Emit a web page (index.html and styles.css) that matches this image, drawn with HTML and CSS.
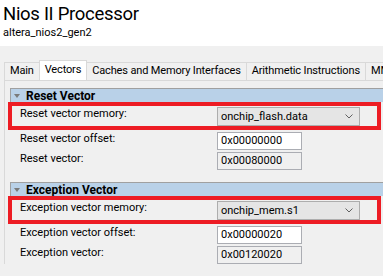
FILE: index.html
```html
<!DOCTYPE html>
<html>

<head>
    <meta charset="utf-8">
    <title>Nios II Processor</title>
    <link rel="stylesheet" href="styles.css">
</head>

<body>

    <header class="top">
        <h1>Nios II Processor</h1>
        <p>altera_nios2_gen2</p>
    </header>

    <section class="main">
        <div class="tabs">
            <div class="tab">Main</div>
            <div class="tab active">Vectors</div>
            <div class="tab">Caches and Memory Interfaces</div>
            <div class="tab">Arithmetic Instructions</div>
            <div class="tab">MMU and MPU Settings</div>
        </div>

        <div class="panel">
            <div class="group">
                <div class="group-title"><span class="caret"></span>Reset Vector</div>
                <div class="row mark">
                    <label>Reset vector memory:</label>
                    <div class="select">onchip_flash.data
                        <svg width="8" height="5" viewBox="0 0 8 5"><path d="M0.5 0.5 L4 4 L7.5 0.5" fill="none" stroke="#606060" stroke-width="1"/></svg>
                    </div>
                </div>
                <div class="row">
                    <label>Reset vector offset:</label>
                    <div class="field">0x00000000</div>
                </div>
                <div class="row">
                    <label>Reset vector:</label>
                    <div class="field ro">0x00080000</div>
                </div>
            </div>

            <div class="group">
                <div class="group-title"><span class="caret"></span>Exception Vector</div>
                <div class="row mark">
                    <label>Exception vector memory:</label>
                    <div class="select">onchip_mem.s1
                        <svg width="8" height="5" viewBox="0 0 8 5"><path d="M0.5 0.5 L4 4 L7.5 0.5" fill="none" stroke="#606060" stroke-width="1"/></svg>
                    </div>
                </div>
                <div class="row">
                    <label>Exception vector offset:</label>
                    <div class="field">0x00000020</div>
                </div>
                <div class="row">
                    <label>Exception vector:</label>
                    <div class="field ro">0x00120020</div>
                </div>
            </div>
        </div>
    </section>

</body>

</html>
```

FILE: styles.css
```css
/* General styles */

html {
    background-color: #f0f0f0;
    font-family: Roboto, "Noto Sans", sans-serif;
    font-size: 11px;
    color: #000;
}

body {
    margin: 0;
    width: 383px;
    height: 276px;
    overflow: hidden;
}

*,
*::after {
    box-sizing: border-box;
}

/* Title area */

.top {
    background-color: #fff;
    height: 46px;
    padding: 2px 0 0 3px;
}

.top h1 {
    margin: 0;
    font-size: 18.5px;
    letter-spacing: -0.3px;
    font-weight: normal;
    line-height: 24px;
}

.top p {
    margin: 0;
    font-size: 11px;
    line-height: 14px;
}

/* Tabs */

.main {
    padding-top: 14px;
}

.tabs {
    display: flex;
    align-items: flex-end;
    padding-left: 5px;
    height: 20px;
    white-space: nowrap;
    letter-spacing: -0.15px;
}

.tab {
    height: 18px;
    line-height: 16px;
    padding: 0 5px;
    border: 1px solid #d9d9d9;
    border-bottom: 0;
    margin-left: -1px;
    background-color: #f0f0f0;
}

.tab.active {
    height: 20px;
    line-height: 18px;
    background-color: #fff;
    position: relative;
    z-index: 1;
}

.panel {
    margin-left: 4px;
    width: 400px;
    border-top: 1px solid #d9d9d9;
    border-left: 1px solid #d9d9d9;
    padding: 7px 0 0 5px;
}

/* Groups */

.group {
    margin-bottom: 12px;
}

.group-title {
    height: 14px;
    line-height: 12px;
    border-top: 1px solid #a0a0a0;
    border-left: 1px solid #a0a0a0;
    background-color: #b9d1e8;
    font-weight: bold;
    font-size: 12px;
    display: flex;
    align-items: center;
    padding-left: 3px;
}

.caret {
    width: 0;
    height: 0;
    border-left: 3.5px solid transparent;
    border-right: 3.5px solid transparent;
    border-top: 4px solid #7a7a7a;
    margin-right: 6px;
}

.row {
    display: flex;
    align-items: center;
    height: 18px;
    margin-top: 2px;
    padding-left: 10px;
}

.row label {
    width: 197px;
    margin-bottom: 5px;
}

.row.mark {
    height: 28px;
    margin-top: 0;
    position: relative;
}

/* red annotation box */
.row.mark::after {
    content: "";
    position: absolute;
    left: -2px;
    top: 0;
    width: 373px;
    height: 28px;
    border: 4px solid #ed1c24;
}

.select {
    width: 143px;
    height: 19px;
    background-color: #e5e5e5;
    border: 1px solid #adadad;
    display: flex;
    align-items: center;
    justify-content: space-between;
    padding: 0 6px 0 3px;
}

.field {
    width: 85px;
    height: 18px;
    border: 1px solid #abadb3;
    background-color: #fff;
    line-height: 16px;
    padding-left: 3px;
}

.field.ro {
    background-color: #f0f0f0;
}
```
